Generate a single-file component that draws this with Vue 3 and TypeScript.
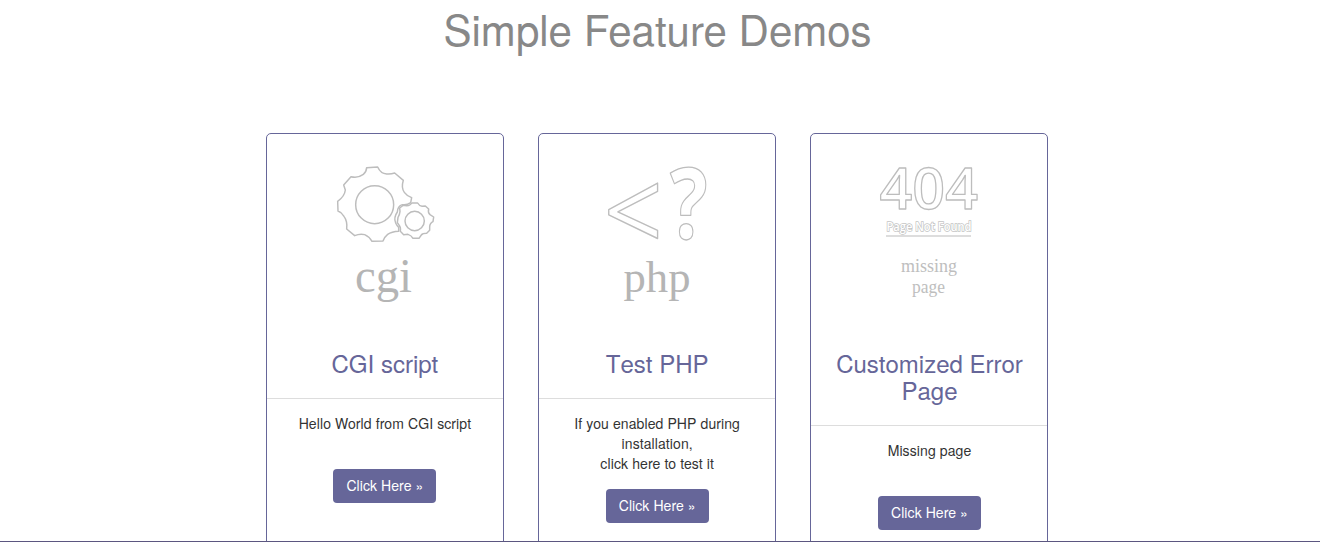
<script setup lang="ts">
interface Demo {
  kind: 'cgi' | 'php' | 'missing'
  title: string
  lines: string[]
}

const demos: Demo[] = [
  { kind: 'cgi', title: 'CGI script', lines: ['Hello World from CGI script'] },
  { kind: 'php', title: 'Test PHP', lines: ['If you enabled PHP during installation,', 'click here to test it'] },
  { kind: 'missing', title: 'Customized Error Page', lines: ['Missing page'] },
]
</script>

<template>
  <main class="page">
    <h1>Simple Feature Demos</h1>
    <section class="cards">
      <article v-for="demo in demos" :key="demo.kind" class="card">
        <header class="head">
          <svg v-if="demo.kind === 'cgi'" class="art" viewBox="0 0 236 216" aria-hidden="true">
            <g transform="translate(58 21) scale(.33333)" class="outline gear">
              <path d="M125 38L158 36Q167 56 185 57Q198 58 209 54L235 76Q228 99 238 112Q246 123 260 128L257 143Q246 151 232 149Q218 153 217 171Q205 188 212 204Q216 213 221 217L221 229Q200 230 188 238Q178 246 174 258L141 259Q133 245 119 239Q105 235 89 242L65 222Q68 199 57 184Q50 172 39 168L38 139Q59 124 61 105L56 90L78 65Q99 70 115 58Q124 51 125 38Z" />
              <circle cx="149" cy="149" r="57" />
              <path d="M261 144L278 144Q283 153 291 154L301 153L311 162Q308 173 315 179L326 186L324 200Q314 205 314 216L314 226L305 235Q293 235 289 240L282 250L264 250Q259 241 249 238L236 239L226 229Q228 217 222 210L217 203L219 187Q224 180 225 169L224 159L234 151Q249 154 254 150Z" />
              <circle cx="269" cy="198" r="29" />
            </g>
            <text class="serif" x="88" y="157.500" font-size="48" textLength="57" lengthAdjust="spacingAndGlyphs">cgi</text>
          </svg>
          <svg v-else-if="demo.kind === 'php'" class="art" viewBox="0 0 236 216" aria-hidden="true">
            <text class="outline symbol" transform="translate(64.500 117.500) scale(1.04 1.14)" font-size="100">&lt;</text>
            <text class="outline symbol bold" transform="translate(131 104.500) scale(.79 .99)" font-size="100">?</text>
            <text class="serif" x="84.500" y="158" font-size="45" textLength="67" lengthAdjust="spacingAndGlyphs">php</text>
          </svg>
          <svg v-else class="art" viewBox="0 0 236 216" aria-hidden="true">
            <text class="outline symbol strong" x="68.500" y="75" font-size="58.500" textLength="98.500" lengthAdjust="spacingAndGlyphs">404</text>
            <text class="symbol small" x="75.500" y="97" font-size="12" textLength="85" lengthAdjust="spacingAndGlyphs">Page Not Found</text>
            <path class="rule" d="M75 102H160" />
            <text class="serif light" x="90" y="137.800" font-size="19" textLength="56" lengthAdjust="spacingAndGlyphs">missing</text>
            <text class="serif light" x="101" y="158.600" font-size="19" textLength="33" lengthAdjust="spacingAndGlyphs">page</text>
          </svg>
          <h2>{{ demo.title }}</h2>
        </header>
        <div class="body">
          <p><span v-for="line in demo.lines" :key="line">{{ line }}</span></p>
          <a class="button">Click Here »</a>
        </div>
      </article>
    </section>
  </main>
</template>

<style>
body { margin: 0; overflow: hidden; }
</style>

<style scoped>
.page {
  box-sizing: border-box;
  height: 542px;
  overflow: hidden;
  border-bottom: 1px solid #5b5680;
  background: #fff;
  color: #333;
  font-family: "TeX Gyre Heros", "Nimbus Sans", "Liberation Sans", Arial, sans-serif;
  font-size: 14px;
  line-height: 20px;
}
h1 {
  margin: 0 5px 82px 0;
  padding-top: 5px;
  color: #888;
  font-size: 42px;
  font-weight: 400;
  line-height: 46px;
  text-align: center;
}
.cards { display: flex; gap: 34.3px; margin-left: 265.9px; align-items: flex-start; }
.card {
  box-sizing: border-box;
  width: 238px;
  height: 480px;
  flex: none;
  border: 1px solid #669;
  border-radius: 5px;
  text-align: center;
}
.head { padding-bottom: 21.6px; border-bottom: 1px solid #ddd; }
.art { display: block; width: 236px; height: 216px; }
h2 {
  margin: 0 20px;
  color: #669;
  font-size: 24px;
  font-weight: 400;
  font-kerning: none;
  line-height: 26.7px;
}
.body { padding: 14px 20px 15px; }
p { min-height: 40px; margin: 0 0 16px; letter-spacing: .1px; }
p span { display: block; }
.button {
  display: inline-block;
  box-sizing: border-box;
  width: 103px;
  height: 34px;
  border-radius: 4px;
  background: #669;
  color: #fff;
  line-height: 32px;
  letter-spacing: .06px;
  white-space: nowrap;
}
.outline { fill: #fff; stroke: #bdbdbd; stroke-width: 1.3; stroke-linejoin: round; }
.gear { stroke-width: 4.4; }
.serif { fill: #b5b5b5; font-family: "Liberation Serif", serif; }
.light { fill: #bebebe; }
.symbol { font-family: "Open Sans", "Noto Sans", sans-serif; }
.strong { font-weight: 600; }
.bold { font-weight: 700; }
.small { fill: #fff; stroke: #c4c4c4; stroke-width: 1.5; paint-order: stroke; font-weight: 600; }
.rule { fill: none; stroke: #ddd; stroke-width: 2; }
</style>
